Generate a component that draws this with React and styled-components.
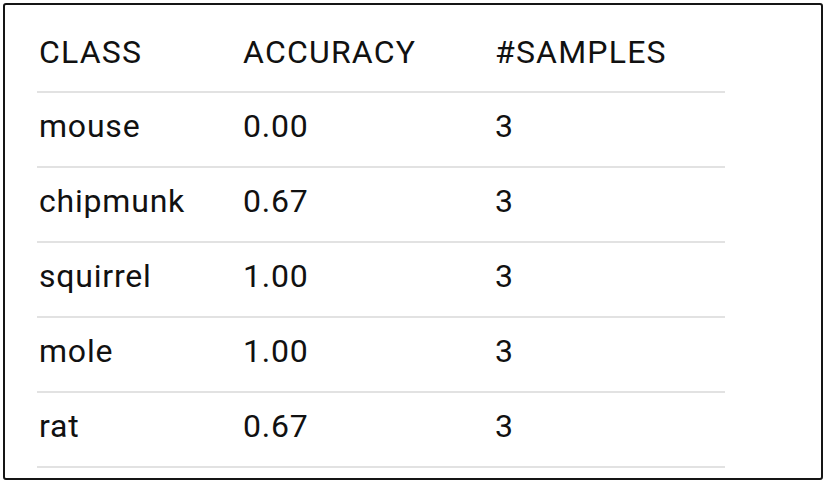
import * as React from "react"
import styled, { createGlobalStyle } from "styled-components"

const GlobalStyle = createGlobalStyle`
  html, body {
    margin: 0;
    padding: 0;
    background: #fff;
  }
  body {
    font-family: Roboto, "Liberation Sans", Arial, sans-serif;
    color: #111;
  }
`

// Outer frame around the table
const Frame = styled.div`
  box-sizing: border-box;
  margin: 3px;
  width: 820px;
  height: 477px;
  border: 2px solid #151515;
  border-radius: 3px;
  padding-left: 32px;
`

const Table = styled.div`
  width: 688px;
`

const Row = styled.div`
  box-sizing: border-box;
  display: grid;
  grid-template-columns: 204px 252px 1fr;
  height: ${(p) => (p.$header ? "88px" : "75px")};
  padding-top: ${(p) => (p.$header ? "28px" : "14px")};
  border-bottom: 2px solid #e2e2e2;
`

const Cell = styled.div`
  font-size: 32px;
  line-height: 38px;
  letter-spacing: ${(p) => (p.$header ? "1.2px" : "0.8px")};
  padding-left: 2px;
  white-space: nowrap;
`

const rows = [
  ["mouse", "0.00", "3"],
  ["chipmunk", "0.67", "3"],
  ["squirrel", "1.00", "3"],
  ["mole", "1.00", "3"],
  ["rat", "0.67", "3"],
]

export default function App() {
  return (
    <>
      <GlobalStyle />
      <Frame>
        <Table>
          <Row $header>
            <Cell $header>CLASS</Cell>
            <Cell $header>ACCURACY</Cell>
            <Cell $header>#SAMPLES</Cell>
          </Row>
          {rows.map((r) => (
            <Row key={r[0]}>
              {r.map((v, i) => (
                <Cell key={i}>{v}</Cell>
              ))}
            </Row>
          ))}
        </Table>
      </Frame>
    </>
  )
}
